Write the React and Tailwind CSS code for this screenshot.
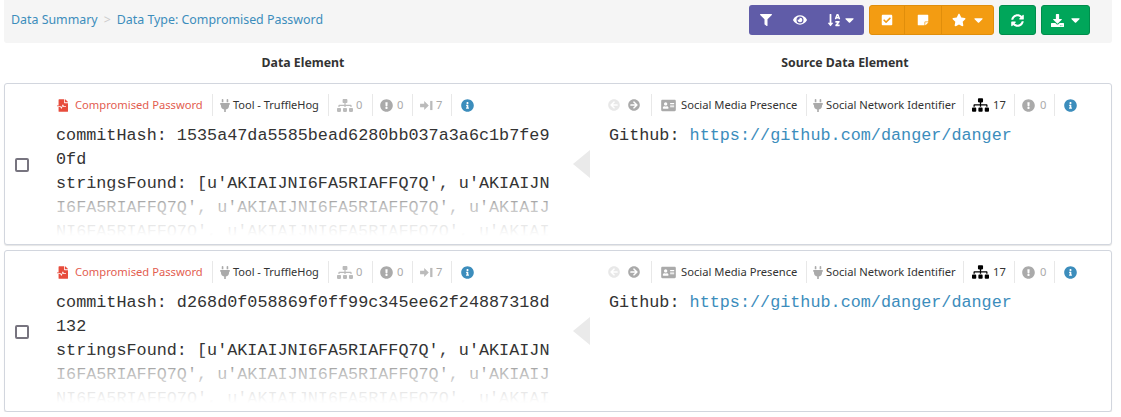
import React from 'react';
import {
  FaFilter, FaEye, FaSortAlphaDown, FaCheckSquare, FaStickyNote, FaStar, FaSyncAlt, FaDownload, FaCaretDown,
  FaFileMedicalAlt, FaPlug, FaSitemap, FaExclamationCircle, FaInfoCircle, FaArrowCircleLeft, FaArrowCircleRight, FaAddressCard,
} from 'react-icons/fa';

// Arrow running into a bar, the "outgoing" count icon
const ArrowBar = ({ className }) => (
  <svg viewBox="0 0 14 12" className={className} fill="currentColor">
    <path d="M0 4h4.500V1l5 5-5 5V8H0z" />
    <rect x="11" y="1" width="2.500" height="10" />
  </svg>
);

const Sep = ({ className }) => <span className={`w-px h-[22px] bg-[#e8e8e8] shrink-0 ${className}`} />;

const Caret = ({ className }) => <FaCaretDown className={`w-[9px] h-[14px] ${className}`} />;

const Toolbar = () => (
  <div className="flex items-center gap-[5px]">
    {/* Filter, visibility, sort */}
    <div className="flex items-center h-[30px] w-[115px] rounded-[3px] bg-[#605ca8] text-white pl-[11px]">
      <FaFilter className="w-[12px] h-[12px]" />
      <FaEye className="w-[14px] h-[14px] ml-[21px]" />
      <FaSortAlphaDown className="w-[14px] h-[14px] ml-[20px]" />
      <Caret className="ml-[4px]" />
    </div>
    {/* Mark, note, star */}
    <div className="flex items-center h-[30px] w-[125px] rounded-[3px] bg-[#f39c12] border border-[#e08e0b] text-white">
      <div className="w-[35px] h-full flex items-center justify-center border-r border-[#e08e0b]">
        <FaCheckSquare className="w-[12px] h-[12px]" />
      </div>
      <div className="w-[37px] h-full flex items-center justify-center border-r border-[#e08e0b]">
        <FaStickyNote className="w-[12px] h-[12px]" />
      </div>
      <div className="flex-1 h-full flex items-center justify-center gap-[8px]">
        <FaStar className="w-[14px] h-[14px]" />
        <Caret />
      </div>
    </div>
    <div className="flex items-center justify-center h-[30px] w-[37px] rounded-[3px] bg-[#00a65a] border border-[#008d4c] text-white">
      <FaSyncAlt className="w-[13px] h-[13px]" />
    </div>
    <div className="flex items-center justify-center gap-[7px] h-[30px] w-[49px] rounded-[3px] bg-[#00a65a] border border-[#008d4c] text-white">
      <FaDownload className="w-[13px] h-[13px]" />
      <Caret />
    </div>
  </div>
);

const DataMeta = () => (
  <div className="flex items-center h-[22px] text-[11.2px] text-[#333]">
    <FaFileMedicalAlt className="ml-[1px] w-[11px] h-[13px] text-[#e74c3c]" />
    <span className="ml-[7px] w-[127px] whitespace-nowrap text-[#e35d4f]">Compromised Password</span>
    <Sep className="ml-[10px]" />
    <FaPlug className="ml-[7px] w-[10px] h-[13px] text-[#aaa]" />
    <span className="ml-[3px] w-[87px] whitespace-nowrap text-[11px]">Tool - TruffleHog</span>
    <Sep className="ml-[8px]" />
    <FaSitemap className="ml-[8px] w-[16px] h-[13px] text-[#bbb]" />
    <span className="ml-[3px] w-[8px] text-[#aaa]">0</span>
    <Sep className="ml-[8px]" />
    <FaExclamationCircle className="ml-[7px] w-[13px] h-[13px] text-[#aaa]" />
    <span className="ml-[4px] w-[7px] text-[#aaa]">0</span>
    <Sep className="ml-[8px]" />
    <ArrowBar className="ml-[7px] w-[13px] h-[11px] text-[#bbb]" />
    <span className="ml-[3px] w-[7px] text-[#aaa]">7</span>
    <Sep className="ml-[8px]" />
    <FaInfoCircle className="ml-[9px] w-[13px] h-[13px] text-[#3c8dbc]" />
  </div>
);

const SourceMeta = () => (
  <div className="flex items-center h-[22px] text-[11.2px] text-[#333]">
    <FaArrowCircleLeft className="w-[12px] h-[12px] text-[#e8e8e8]" />
    <FaArrowCircleRight className="ml-[8px] w-[12px] h-[12px] text-[#aaa]" />
    <Sep className="ml-[11px]" />
    <FaAddressCard className="ml-[9px] w-[15px] h-[13px] text-[#aaa]" />
    <span className="ml-[5px] w-[116px] whitespace-nowrap">Social Media Presence</span>
    <Sep className="ml-[9px]" />
    <FaPlug className="ml-[6px] w-[10px] h-[13px] text-[#aaa]" />
    <span className="ml-[3px] w-[129px] whitespace-nowrap">Social Network Identifier</span>
    <Sep className="ml-[8px]" />
    <FaSitemap className="ml-[8px] w-[17px] h-[14px] text-black" />
    <span className="ml-[4px] w-[13px]">17</span>
    <Sep className="ml-[8px]" />
    <FaExclamationCircle className="ml-[7px] w-[13px] h-[13px] text-[#aaa]" />
    <span className="ml-[5px] w-[7px] text-[#aaa]">0</span>
    <Sep className="ml-[7px]" />
    <FaInfoCircle className="ml-[9px] w-[13px] h-[13px] text-[#3c8dbc]" />
  </div>
);

const Card = ({ hash }) => (
  <div className="flex h-[162px] rounded-[3px] border border-[#d2d6de] shadow-[0_1px_1px_rgba(0,0,0,0.1)] bg-white overflow-hidden">
    <div className="w-[51px] shrink-0 flex items-center pl-[10px] pt-[2px]">
      <span className="w-[14px] h-[14px] rounded-[2px] border-2 border-[#77747f] bg-white" />
    </div>

    {/* Data element */}
    <div className="w-[495px] shrink-0 pt-[10px]">
      <DataMeta />
      <div className="relative mt-[8px] h-[112px] overflow-hidden break-all font-['Liberation_Mono',monospace] text-[16.8px] leading-[24px] text-[#333]">
        <div>commitHash: {hash}</div>
        <div>stringsFound: [u'AKIAIJNI6FA5RIAFFQ7Q', u'AKIAIJNI6FA5RIAFFQ7Q', u'AKIAIJNI6FA5RIAFFQ7Q', u'AKIAIJNI6FA5RIAFFQ7Q', u'AKIAIJNI6FA5RIAFFQ7Q', u'AKIAI</div>
        <div className="absolute inset-x-0 bottom-0 h-[50px] bg-gradient-to-b from-white/0 via-white/65 via-35% to-white" />
      </div>
    </div>

    <div className="ml-[22px] self-center w-0 h-0 border-y-[14px] border-y-transparent border-r-[17px] border-r-[#eaeaea]" />

    {/* Source data element */}
    <div className="ml-[18px] flex-1 pt-[10px]">
      <SourceMeta />
      <div className="mt-[8px] pl-[1px] font-['Liberation_Mono',monospace] text-[16.8px] leading-[24px] text-[#333]">
        Github: <span className="text-[#3c8dbc]">https://github.com/danger/danger</span>
      </div>
    </div>
  </div>
);

export default function App() {
  return (
    <div className="pl-[4px] pr-[9px] bg-white font-['Noto_Sans',sans-serif]">
      <div className="flex items-start justify-between h-[43px] pl-[7px] pr-[22px] pt-[5px] bg-[#f5f5f5] rounded-b-[3px]">
        <div className="flex items-center h-[30px] text-[12.4px] text-[#3c8dbc]">
          <span>Data Summary</span>
          <span className="mx-[6px] text-[#ccc]">&gt;</span>
          <span>Data Type: Compromised Password</span>
        </div>
        <Toolbar />
      </div>

      <div className="flex items-center h-[40px] text-[12.3px] font-bold text-[#333]">
        <div className="w-[598px] text-center">Data Element</div>
        <div className="w-[486px] text-center">Source Data Element</div>
      </div>

      <div className="flex flex-col gap-[5px]">
        <Card hash="1535a47da5585bead6280bb037a3a6c1b7fe90fd" />
        <Card hash="d268d0f058869f0ff99c345ee62f24887318d132" />
      </div>
    </div>
  );
}
